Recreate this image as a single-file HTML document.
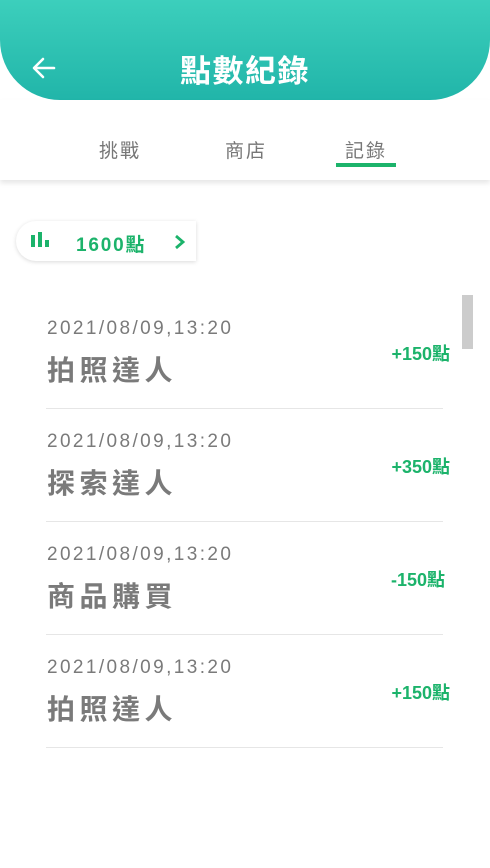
<!DOCTYPE html>
<html><head><meta charset="utf-8"><style>
*{margin:0;padding:0;box-sizing:border-box}
body{width:490px;height:868px;background:#fff;font-family:"Liberation Sans","Noto Sans CJK TC",sans-serif;position:relative;overflow:hidden}
.hdr{position:absolute;left:0;top:0;width:490px;height:100px;background:linear-gradient(#3ccfbc,#21b5a9);border-radius:0 0 60px 60px}
.title{position:absolute;left:0;width:490px;top:46px;text-align:center;color:#fff;font-size:31px;font-weight:bold;letter-spacing:1.5px}
.tabs{position:absolute;top:100px;left:0;width:490px;height:80px;background:#fff;box-shadow:0 3px 5px rgba(0,0,0,.1)}
.tab{position:absolute;top:36px;font-size:19px;color:#777;letter-spacing:2px;width:80px;text-align:center;transform:translateX(-50%)}
.ul{position:absolute;left:336px;top:63px;width:60px;height:4px;background:#1cb36b}
.pill{position:absolute;left:16px;top:221px;width:180px;height:40px;background:#fff;border-radius:20px 0 0 20px;box-shadow:0 1px 4px rgba(0,0,0,.15)}
.pill span{position:absolute;left:60px;top:9px;color:#1cb36b;font-weight:bold;font-size:19px;letter-spacing:1.8px}
.row{position:absolute;left:46px;width:397px;height:113px;border-bottom:1px solid #e6e6e6}
.d{position:absolute;left:1px;top:22px;font-size:19px;color:#7a7a7a;letter-spacing:2.4px}
.n{position:absolute;left:1px;top:53px;font-size:28px;font-weight:bold;color:#7a7a7a;letter-spacing:4.5px}
.p{position:absolute;right:-7px;top:44px;font-size:18px;font-weight:bold;color:#1cb36b}
.sb{position:absolute;left:462px;top:295px;width:11px;height:54px;background:#ccc}
</style></head><body>
<div class="hdr">
<svg style="position:absolute;left:32px;top:57px" width="24" height="22" viewBox="0 0 24 22"><path d="M22 11H3M11 2L2 11l9 9" fill="none" stroke="#fff" stroke-width="2.6" stroke-linecap="round" stroke-linejoin="round"/></svg>
<div class="title">點數紀錄</div>
</div>
<div class="tabs">
<div class="tab" style="left:120px">挑戰</div>
<div class="tab" style="left:246px">商店</div>
<div class="tab" style="left:366px;color:#777">記錄</div>
<div class="ul"></div>
</div>
<div class="pill">
<svg style="position:absolute;left:15px;top:11px" width="20" height="16"><rect x="0" y="3" width="4" height="12" fill="#1cb36b"/><rect x="7" y="0" width="4" height="15" fill="#1cb36b"/><rect x="14" y="8" width="4" height="7" fill="#1cb36b"/></svg>
<span>1600點</span>
<svg style="position:absolute;left:158px;top:13px" width="12" height="16"><path d="M2 2l7 6-7 6" fill="none" stroke="#1cb36b" stroke-width="2.8"/></svg>
</div>
<div class="sb"></div>
<div class="row" style="top:296px"><div class="d">2021/08/09,13:20</div><div class="n">拍照達人</div><div class="p">+150點</div></div>
<div class="row" style="top:409px"><div class="d">2021/08/09,13:20</div><div class="n">探索達人</div><div class="p">+350點</div></div>
<div class="row" style="top:522px"><div class="d">2021/08/09,13:20</div><div class="n">商品購買</div><div class="p" style="right:-2px">-150點</div></div>
<div class="row" style="top:635px"><div class="d">2021/08/09,13:20</div><div class="n">拍照達人</div><div class="p">+150點</div></div>
</body></html>
